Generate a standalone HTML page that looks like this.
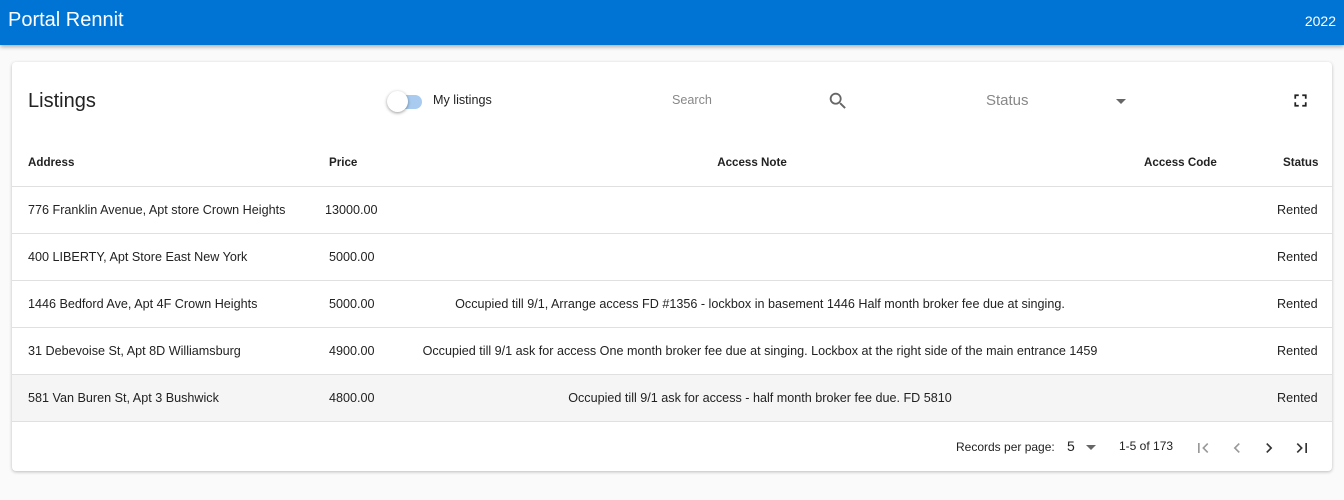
<!DOCTYPE html>
<html><head><style>
*{margin:0;padding:0;box-sizing:border-box}
body{width:1344px;height:500px;background:#fafafa;font-family:"Liberation Sans",Arial,sans-serif;position:relative;overflow:hidden;color:#222}
.bar{position:absolute;left:0;top:0;width:1344px;height:45px;background:#0074d4;box-shadow:0 2px 4px rgba(0,0,0,.3)}
.bar .t{position:absolute;left:8px;top:9px;color:#fff;font-size:20px}
.bar .y{position:absolute;right:8px;top:13px;color:#fff;font-size:14px}
.card{position:absolute;left:12px;top:62px;width:1320px;height:409px;background:#fff;border-radius:4px;box-shadow:0 1px 3px rgba(0,0,0,.25)}
.a{position:absolute;font-size:12.6px;white-space:nowrap}
.row{position:absolute;left:0;width:1320px;height:47px;border-top:1px solid #e0e0e0}
.h{font-weight:bold;font-size:11.6px}
.c{transform:translateX(-50%)}
svg.p{position:absolute;top:16px}
</style></head><body>
<div class="bar"><div class="t">Portal Rennit</div><div class="y">2022</div></div>
<div class="card">
<div class="a" style="left:16px;top:28px;font-size:20px">Listings</div>
<div style="position:absolute;left:378px;top:33px;width:32px;height:14px;border-radius:7px;background:#a8cbef"></div>
<div style="position:absolute;left:375px;top:29px;width:21px;height:21px;border-radius:50%;background:#fff;box-shadow:0 1px 3px rgba(0,0,0,.4)"></div>
<div class="a" style="left:421px;top:31px">My listings</div>
<div class="a" style="left:660px;top:31px;color:#888">Search</div>
<svg style="position:absolute;left:815px;top:28px" width="22" height="22" viewBox="0 0 24 24"><path fill="#666" d="M15.5 14h-.8l-.3-.3A6.5 6.5 0 1 0 9.5 16a6.5 6.5 0 0 0 4.2-1.6l.3.3v.8l5 5 1.5-1.5-5-5zm-6 0A4.5 4.5 0 1 1 14 9.5 4.5 4.5 0 0 1 9.5 14z"/></svg>
<div class="a" style="left:974px;top:30px;color:#888;font-size:15px">Status</div>
<div style="position:absolute;left:1104px;top:37px;border-left:5px solid transparent;border-right:5px solid transparent;border-top:5px solid #666"></div>
<svg style="position:absolute;left:1278px;top:28px" width="21" height="21" viewBox="0 0 24 24"><path fill="#222" d="M7 14H5v5h5v-2H7v-3zm-2-4h2V7h3V5H5v5zm12 7h-3v2h5v-5h-2v3zM14 5v2h3v3h2V5h-5z"/></svg>
<div class="a h" style="left:16px;top:94px">Address</div>
<div class="a h" style="left:317px;top:94px">Price</div>
<div class="a h c" style="left:740px;top:94px">Access Note</div>
<div class="a h" style="left:1132px;top:94px">Access Code</div>
<div class="a h" style="left:1271px;top:94px">Status</div>
<div class="row" style="top:124px"><div class="a" style="left:16px;top:16px">776 Franklin Avenue, Apt store Crown Heights</div><div class="a" style="left:313px;top:16px">13000.00</div><div class="a" style="left:1265px;top:16px">Rented</div></div>
<div class="row" style="top:171px"><div class="a" style="left:16px;top:16px">400 LIBERTY, Apt Store East New York</div><div class="a" style="left:317px;top:16px">5000.00</div><div class="a" style="left:1265px;top:16px">Rented</div></div>
<div class="row" style="top:218px"><div class="a" style="left:16px;top:16px">1446 Bedford Ave, Apt 4F Crown Heights</div><div class="a" style="left:317px;top:16px">5000.00</div><div class="a c" style="left:748px;top:16px">Occupied till 9/1, Arrange access FD #1356 - lockbox in basement 1446 Half month broker fee due at singing.</div><div class="a" style="left:1265px;top:16px">Rented</div></div>
<div class="row" style="top:265px"><div class="a" style="left:16px;top:16px">31 Debevoise St, Apt 8D Williamsburg</div><div class="a" style="left:317px;top:16px">4900.00</div><div class="a c" style="left:748px;top:16px">Occupied till 9/1 ask for access One month broker fee due at singing. Lockbox at the right side of the main entrance 1459</div><div class="a" style="left:1265px;top:16px">Rented</div></div>
<div class="row" style="top:312px;background:#f5f5f5"><div class="a" style="left:16px;top:16px">581 Van Buren St, Apt 3 Bushwick</div><div class="a" style="left:317px;top:16px">4800.00</div><div class="a c" style="left:748px;top:16px">Occupied till 9/1 ask for access - half month broker fee due. FD 5810</div><div class="a" style="left:1265px;top:16px">Rented</div></div>
<div class="row" style="top:359px;height:50px">
<div class="a" style="left:944px;top:18px;font-size:12px">Records per page:</div>
<div class="a" style="left:1055px;top:16px;font-size:14px">5</div>
<div style="position:absolute;left:1074px;top:23px;border-left:5px solid transparent;border-right:5px solid transparent;border-top:5px solid #666"></div>
<div class="a" style="left:1107px;top:17px;font-size:12px">1-5 of 173</div>
<svg class="p" style="left:1181px" width="20" height="20" viewBox="0 0 24 24"><path fill="#999" d="M18.4 16.6L13.8 12l4.6-4.6L17 6l-6 6 6 6zM6 6h2v12H6z"/></svg>
<svg class="p" style="left:1215px" width="20" height="20" viewBox="0 0 24 24"><path fill="#999" d="M15.4 7.4L14 6l-6 6 6 6 1.4-1.4-4.6-4.6z"/></svg>
<svg class="p" style="left:1247px" width="20" height="20" viewBox="0 0 24 24"><path fill="#333" d="M10 6L8.6 7.4l4.6 4.6-4.6 4.6L10 18l6-6z"/></svg>
<svg class="p" style="left:1280px" width="20" height="20" viewBox="0 0 24 24"><path fill="#333" d="M5.6 7.4L10.2 12l-4.6 4.6L7 18l6-6-6-6zM16 6h2v12h-2z"/></svg>
</div>
</div>
</body></html>
